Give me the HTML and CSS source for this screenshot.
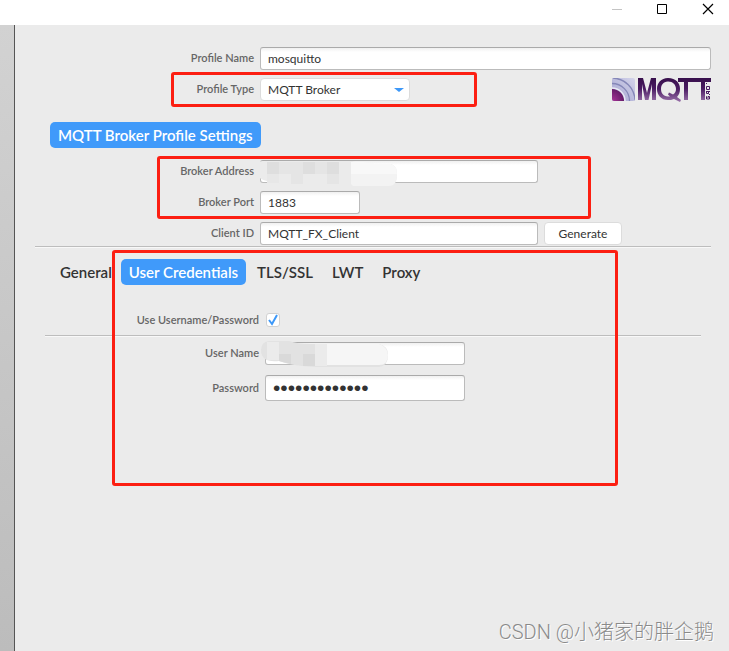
FILE: index.html
```html
<!DOCTYPE html>
<html lang="en">
<head>
<meta charset="utf-8">
<title>Edit Connection Profiles</title>
<link rel="stylesheet" href="styles.css">
</head>
<body>
<div class="window">
  <header class="titlebar">
    <button class="win-btn" aria-label="Minimize" disabled><svg width="12" height="12" viewBox="0 0 12 12"><path d="M0 6.500h10" stroke="#c4c4c4"/></svg></button>
    <button class="win-btn" aria-label="Maximize"><svg width="12" height="12" viewBox="0 0 12 12"><path d="M.5 1.500h9v9h-9z" fill="none" stroke="#000"/></svg></button>
    <button class="win-btn" aria-label="Close"><svg width="12" height="12" viewBox="0 0 12 12"><path d="M1 1l10 10M11 1L1 11" stroke="#000" stroke-width="1.200"/></svg></button>
  </header>
  <div class="body">
    <aside class="divider"></aside>
    <main class="content">
      <form class="form">
        <div class="row">
          <label for="name">Profile Name</label>
          <div class="field"><input id="name" class="wide" type="text" value="mosquitto"></div>
        </div>
        <div class="row">
          <span class="mark mark-type"></span>
          <label for="type">Profile Type</label>
          <div class="field">
            <select id="type"><option>MQTT Broker</option></select>
            <svg class="logo" width="99" height="25" viewBox="0 0 99 25" role="img" aria-label="MQTT.org">
              <defs>
                <linearGradient id="ink" gradientUnits="userSpaceOnUse" x1="0" y1="0" x2="0" y2="24"><stop offset="0" stop-color="#38104c"/><stop offset=".45" stop-color="#4a1b62"/><stop offset="1" stop-color="#9a72aa"/></linearGradient>
                <linearGradient id="tile" x1="0" y1="1" x2="1" y2="0"><stop offset="0" stop-color="#a3a3d0"/><stop offset="1" stop-color="#d4d4ea"/></linearGradient>
                <radialGradient id="core" gradientUnits="userSpaceOnUse" cx="0" cy="23" r="12"><stop offset="0" stop-color="#a83498"/><stop offset="1" stop-color="#651c68"/></radialGradient>
                <clipPath id="tileclip"><rect width="23" height="23" rx="2"/></clipPath>
              </defs>
              <g clip-path="url(#tileclip)">
                <rect width="23" height="23" fill="url(#tile)"/>
                <g fill="none" stroke="#e9e9f5" stroke-width="1.500"><circle cx="0" cy="23" r="13"/></g>
                <g fill="none" stroke="#8587b8" stroke-width="1.300"><circle cx="0" cy="23" r="17.500"/><circle cx="0" cy="23" r="23"/></g>
                <circle cx="0" cy="23" r="12" fill="url(#core)"/>
              </g>
              <g fill="url(#ink)">
                <path d="M26 22V0h5l4 15 4-15h5v22h-4V6l-3.500 16h-3.500L30 6v16z"/>
                <path fill-rule="evenodd" d="M56 0c8 0 12 5 12 11 0 3-1 6-3 8l4 3-1 2-6-3c-2 1-4 1-6 1-7 0-11-5-11-11S49 0 56 0zm0 3.500c-5 0-7 4-7 7.500s2 7.500 7 7.500h2l-2-2 1-2 4 2c2-1 3-3 3-5.500 0-4-3-7.500-8-7.500z"/>
                <path d="M66 0h33v4h-6v18h-4V4H76v18h-4V4h-6z"/>
              </g>
              <g fill="none" stroke="#4a1b62"><path d="M94 5.500h1"/><path d="M94.500 8.500h3v3h-3z"/><path d="M98 13.500h-4M94.500 13v2.500h2V13M96.500 15.500L98 17"/><path d="M95 18.500h-.5v2.500h3v-2.500h-1.500v1.500"/></g>
            </svg>
          </div>
        </div>
        <h2 class="heading"><span class="pill">MQTT Broker Profile Settings</span></h2>
        <section class="group">
          <span class="mark mark-broker"></span>
          <div class="row">
            <label for="address">Broker Address</label>
            <div class="field"><input id="address" class="long" type="text">
              <svg class="mosaic mosaic-address" width="142" height="26" viewBox="0 0 142 26" aria-hidden="true">
                <path d="M0 3Q2 0 12 0H96Q103 2 118 3H136Q142 5 142 13Q142 25 134 25H98L92 23H32Q10 22 2 15Z" fill="#ebebeb"/>
                <path d="M24 1h24v12H24zM60 1h12v12H60zM36 13h12v10H36zM72 13h12v10H72z" fill="#e5e5e5"/><path d="M12 1h12v20H12zM48 1h12v12H48zM72 1h12v12H72z" fill="#dedede"/><path d="M12 13h12v9H12z" fill="#e7e7e7"/>
                <path d="M96 1h12l12 2h16q6 2 6 10H96z" fill="#f8f8f8"/><path d="M96 13h46q0 12-8 12H98l-2-2z" fill="#f3f3f3"/>
              </svg></div>
          </div>
          <div class="row">
            <label for="port">Broker Port</label>
            <div class="field"><input id="port" class="short" type="text" value="1883"></div>
          </div>
          <div class="row">
            <label for="client">Client ID</label>
            <div class="field"><input id="client" class="long" type="text" value="MQTT_FX_Client"><button type="button" class="generate">Generate</button></div>
          </div>
        </section>
        <hr>
        <section class="details">
          <span class="mark mark-credentials"></span>
          <nav class="tabs">
            <button type="button" class="tab">General</button>
            <button type="button" class="tab pill">User Credentials</button>
            <button type="button" class="tab">TLS/SSL</button>
            <button type="button" class="tab">LWT</button>
            <button type="button" class="tab">Proxy</button>
          </nav>
          <div class="panel">
            <div class="row check-row">
              <label for="auth">Use Username/Password</label>
              <div class="field check"><input id="auth" type="checkbox" checked><svg class="tick" width="14" height="14" viewBox="0 0 14 14" aria-hidden="true"><path d="M3 7l3 4 5-9" fill="none" stroke="#3d98f8" stroke-width="2"/></svg></div>
            </div>
            <hr>
            <div class="row user-row">
              <label for="user">User Name</label>
              <div class="field"><input id="user" class="medium" type="text">
                <svg class="mosaic mosaic-user" width="128" height="27" viewBox="0 0 128 27" aria-hidden="true">
                  <path d="M8 0H28Q36 3 50 3H118Q127 5 127 14Q127 25 118 26H55Q30 25 18 20Q0 22 0 9Q0 1 8 0Z" fill="#e2e2e2"/>
                  <path d="M6 1h12v18H6zM54 3h12v22H54z" fill="#ebebeb"/><path d="M18 13h12v10l-12-3zM42 13h12v12H42z" fill="#d9d9d9"/>
                  <path d="M66 3h52q9 3 9 11 0 10-9 10H66z" fill="#f6f6f6"/>
                </svg></div>
            </div>
            <div class="row">
              <label for="password">Password</label>
              <div class="field"><input id="password" class="medium tall" type="password" value="1234567890123"></div>
            </div>
          </div>
        </section>
      </form>
      <footer class="watermark">CSDN @小猪家的胖企鹅</footer>
    </main>
  </div>
</div>
</body>
</html>
```
FILE: styles.css
```css
* { box-sizing: border-box; }
body { margin: 0; font-family: Lato, "Noto Sans CJK SC", sans-serif; font-size: 12px; color: #333; }
.window { min-height: 100vh; display: flex; flex-direction: column; background: #ebebeb; }
.titlebar { height: 25px; display: flex; justify-content: flex-end; gap: 33px; padding: 3px 15px 0 0; background: #fff; }
.win-btn { width: 12px; height: 12px; padding: 0; border: 0; background: none; }
.win-btn svg { display: block; }
.body { flex: 1; display: flex; }
.divider { flex: 0 0 15px; border-right: 1px solid #555; background: linear-gradient(#d2d2d2, #bcbcbc); }
.content { flex: 1; display: flex; flex-direction: column; min-width: 0; padding: 22px 18px 5px 20px; }
.form { flex: 1; }
.row { position: relative; display: grid; grid-template-columns: 219px 1fr; column-gap: 6px; margin-bottom: 8px; }
label { text-align: right; font-size: 11px; line-height: 22px; font-weight: 600; color: #666; white-space: nowrap; }
.field { position: relative; display: flex; gap: 6px; min-width: 0; }
input, select, button { font: inherit; color: #333; }
input[type="text"], input[type="password"] { height: 23px; padding: 0 7px; border: 1px solid #bbb; border-top-color: #aaa; border-radius: 3px; background: linear-gradient(#f0f0f0, #fff 4px); outline: 0; }
.wide { width: 100%; }
.long { width: 278px; }
.medium { width: 200px; }
.short { width: 100px; }
input[type="password"].tall { height: 26px; }
select { width: 150px; height: 23px; padding: 0 7px; appearance: none; border: 1px solid #dcdcdc; border-radius: 4px; background: #fff; }
.field:has(select)::after { content: ""; position: absolute; left: 134px; top: 10px; border: 5px solid transparent; border-width: 4px 5px 0; border-top-color: #3d98f8; pointer-events: none; }
.logo { margin: 0 0 -2px auto; }
.generate { width: 78px; height: 23px; padding: 0; border: 1px solid #dcdcdc; border-radius: 4px; background: #fff; }
.heading { display: flex; margin: 21px 0 12px 15px; font-size: 15px; }
.pill { height: 26px; padding: 0 8px; border-radius: 5px; background: #409afa; color: #fff; font-size: 15px; line-height: 27px; font-weight: 600; }
.group, .details { position: relative; }
.group .row:last-child { margin-bottom: 0; }
hr { height: 2px; margin: 1px 0 0; border: 0; border-top: 1px solid #bdbdbd; background: #f8f8f8; }
.tabs { display: flex; padding: 11px 0 0 25px; }
.tab { height: 26px; margin-right: 19px; padding: 0; border: 0; background: none; font-size: 15px; line-height: 27px; font-weight: 600; white-space: nowrap; }
.tab:first-child { margin-right: 9px; }
.tab.pill { margin-right: 11px; padding: 0 8px; background: #409afa; color: #fff; }
.panel { padding: 24px 10px 0; }
.panel .row { grid-template-columns: 214px 1fr; margin-bottom: 10px; }
.panel .check-row { margin-bottom: 4px; }
.panel .user-row { margin-top: 5px; }
.check { align-items: center; }
.check input { width: 14px; height: 14px; margin: 0 0 0 1px; appearance: none; border: 1px solid #d2d2d2; border-radius: 3px; background: #fff; }
.tick { position: absolute; left: 1px; top: 4px; pointer-events: none; }
#password { font: 21px "Liberation Sans", sans-serif; }
label[for="password"] { line-height: 26px; }
.mosaic { position: absolute; pointer-events: none; }
.mosaic-address { left: -5px; top: 1px; }
.mosaic-user { left: -4px; top: -1px; }
.mark { position: absolute; z-index: 1; border: 3px solid #fc1f12; border-radius: 3px; pointer-events: none; }
.mark-type { left: 136px; top: -6px; width: 306px; height: 35px; }
.mark-broker { left: 122px; top: -4px; width: 434px; height: 63px; }
.mark-credentials { left: 77px; top: 2px; width: 506px; height: 236px; }
.watermark { align-self: flex-end; margin-right: -3px; font: 300 20px/28px Roboto, "Noto Sans CJK SC", sans-serif; color: #8a8a8a; text-shadow: 1px 1px 0 #fff; }
```
